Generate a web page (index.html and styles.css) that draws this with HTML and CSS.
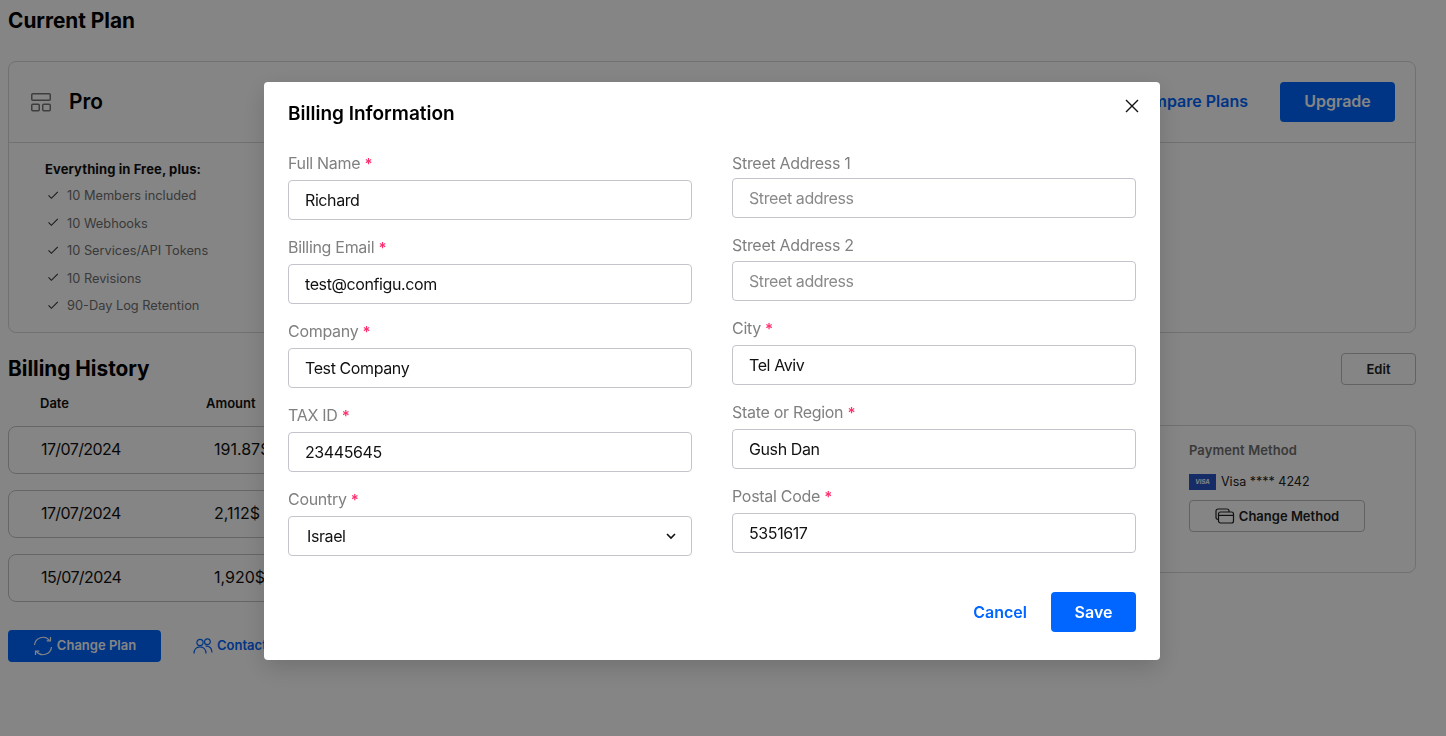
FILE: index.html
```html
<!DOCTYPE html>
<html lang="en">
<head>
    <meta charset="UTF-8">
    <meta name="viewport" content="width=device-width, initial-scale=1.0">
    <title>Billing</title>
    <link rel="stylesheet" href="styles.css">
</head>
<body>
    <main class="page">
        <h1 class="page-title">Current Plan</h1>

        <section class="plan-card">
            <div class="plan-head">
                <svg class="plan-icon" width="22" height="20" viewBox="0 0 22 20" fill="none" stroke="#777" stroke-width="1.5">
                    <rect x="1.75" y="1.75" width="18.5" height="6.5" rx="1"/>
                    <rect x="1.75" y="12.25" width="7.5" height="6.5" rx="1"/>
                    <rect x="12.75" y="12.25" width="7.5" height="6.5" rx="1"/>
                </svg>
                <h2 class="plan-name">Pro</h2>
                <a class="compare-link">Compare Plans</a>
                <button class="btn-upgrade">Upgrade</button>
            </div>
            <div class="plan-body">
                <p class="plan-intro">Everything in Free, plus:</p>
                <ul class="plan-list">
                    <li><svg width="12" height="10" viewBox="0 0 12 10" fill="none" stroke="#333" stroke-width="1.1"><path d="M1.5 4.4l2.9 2.9L10.8 .9"/></svg>10 Members included</li>
                    <li><svg width="12" height="10" viewBox="0 0 12 10" fill="none" stroke="#333" stroke-width="1.1"><path d="M1.5 4.4l2.9 2.9L10.8 .9"/></svg>10 Webhooks</li>
                    <li><svg width="12" height="10" viewBox="0 0 12 10" fill="none" stroke="#333" stroke-width="1.1"><path d="M1.5 4.4l2.9 2.9L10.8 .9"/></svg>10 Services/API Tokens</li>
                    <li><svg width="12" height="10" viewBox="0 0 12 10" fill="none" stroke="#333" stroke-width="1.1"><path d="M1.5 4.4l2.9 2.9L10.8 .9"/></svg>10 Revisions</li>
                    <li><svg width="12" height="10" viewBox="0 0 12 10" fill="none" stroke="#333" stroke-width="1.1"><path d="M1.5 4.4l2.9 2.9L10.8 .9"/></svg>90-Day Log Retention</li>
                </ul>
            </div>
        </section>

        <div class="billing-head">
            <h2 class="billing-title">Billing History</h2>
            <button class="btn-edit">Edit</button>
        </div>

        <div class="billing-grid">
            <div class="history">
                <div class="history-cols">
                    <span class="col-date">Date</span>
                    <span>Amount</span>
                </div>
                <div class="history-row"><span class="col-date">17/07/2024</span><span>191.87$</span></div>
                <div class="history-row"><span class="col-date">17/07/2024</span><span>2,112$</span></div>
                <div class="history-row"><span class="col-date">15/07/2024</span><span>1,920$</span></div>
            </div>
            <aside class="payment">
                <h3 class="payment-title">Payment Method</h3>
                <div class="payment-card">
                    <span class="visa-logo">VISA</span>
                    <span class="visa-text">Visa **** 4242</span>
                </div>
                <button class="btn-method">
                    <svg width="20" height="16" viewBox="0 0 20 16" fill="none" stroke="#222" stroke-width="1.2">
                        <path d="M3.5 11.4H3a2 2 0 0 1-2-2V3a2 2 0 0 1 2-2h9a2 2 0 0 1 2 2v1"/>
                        <rect x="3.5" y="4" width="15" height="11" rx="2"/>
                        <path d="M3.5 7.4h15"/>
                    </svg>
                    Change Method
                </button>
            </aside>
        </div>

        <div class="page-actions">
            <button class="btn-change">
                <svg width="20" height="20" viewBox="0 0 20 20" fill="none" stroke="#fff" stroke-width="1.2">
                    <path d="M1.5 9a8.5 8.5 0 0 1 15-4.6"/>
                    <path d="M17.5 1v3.8h-3.8"/>
                    <path d="M18.5 11a8.5 8.5 0 0 1-15 4.6"/>
                    <path d="M2.5 19v-3.8h3.8"/>
                </svg>
                <span class="btn-change-text">Change Plan</span>
            </button>
            <a class="contact-link">
                <svg width="20" height="16" viewBox="0 0 20 16" fill="none" stroke="#0066ff" stroke-width="1.2">
                    <circle cx="7" cy="4.4" r="3.1"/>
                    <circle cx="14.4" cy="3.8" r="2.9"/>
                    <path d="M1 15.500c0-4 2.500-6.600 6-6.600s6 2.600 6 6.600"/>
                    <path d="M12.600 8.200c3.600-.5 6.400 1.900 6.400 6.300"/>
                </svg>
                <span class="btn-change-text">Contact Sales</span>
            </a>
        </div>
    </main>

    <div class="overlay">
        <form class="modal">
            <div class="modal-head">
                <h2 class="modal-title">Billing Information</h2>
                <svg class="modal-close" width="14" height="14" viewBox="0 0 14 14" fill="none" stroke="#111" stroke-width="1.4">
                    <path d="M1 1l12 12M13 1L1 13"/>
                </svg>
            </div>

            <div class="modal-cols">
                <div class="modal-col">
                    <div class="field">
                        <label class="label req">Full Name <span class="star">*</span></label>
                        <input class="input" value="Richard">
                    </div>
                    <div class="field">
                        <label class="label req">Billing Email <span class="star">*</span></label>
                        <input class="input" value="test@configu.com">
                    </div>
                    <div class="field">
                        <label class="label req">Company <span class="star">*</span></label>
                        <input class="input" value="Test Company">
                    </div>
                    <div class="field">
                        <label class="label req">TAX ID <span class="star">*</span></label>
                        <input class="input" value="23445645">
                    </div>
                    <div class="field">
                        <label class="label req">Country <span class="star">*</span></label>
                        <div class="select-wrap">
                            <select class="input select"><option>Israel</option></select>
                            <svg class="select-arrow" width="10" height="7" viewBox="0 0 10 7" fill="none" stroke="#111" stroke-width="1.6"><path d="M1 1l4 4 4-4"/></svg>
                        </div>
                    </div>
                </div>

                <div class="modal-col">
                    <div class="field">
                        <label class="label">Street Address 1</label>
                        <input class="input" placeholder="Street address">
                    </div>
                    <div class="field">
                        <label class="label">Street Address 2</label>
                        <input class="input" placeholder="Street address">
                    </div>
                    <div class="field">
                        <label class="label req">City <span class="star">*</span></label>
                        <input class="input" value="Tel Aviv">
                    </div>
                    <div class="field">
                        <label class="label req">State or Region <span class="star">*</span></label>
                        <input class="input" value="Gush Dan">
                    </div>
                    <div class="field">
                        <label class="label req">Postal Code <span class="star">*</span></label>
                        <input class="input" value="5351617">
                    </div>
                </div>
            </div>

            <div class="modal-foot">
                <a class="btn-cancel">Cancel</a>
                <button class="btn-save" type="button">Save</button>
            </div>
        </form>
    </div>
</body>
</html>
```

FILE: styles.css
```css
* {
    box-sizing: border-box;
}

body {
    margin: 0;
    height: 736px;
    overflow: hidden;
    background: #fff;
    color: #000;
    font-family: Inter, "Liberation Sans", sans-serif;
}

h1, h2, h3, p, ul {
    margin: 0;
    padding: 0;
}

button {
    font-family: inherit;
    cursor: pointer;
}

.page {
    padding: 7px 30px 0 8px;
}

.page-title {
    font-size: 20.8px;
    line-height: 28px;
    font-weight: 700;
    margin-bottom: 26px;
}

/* plan card */
.plan-card {
    height: 272px;
    border: 1px solid #d8d8d8;
    border-radius: 8px;
}

.plan-head {
    display: flex;
    align-items: center;
    height: 81px;
    padding: 0 20px 0 21px;
    border-bottom: 1px solid #d8d8d8;
}

.plan-icon {
    margin-right: 17px;
}

.plan-name {
    font-size: 20.8px;
    font-weight: 600;
    padding-bottom: 2px;
}

.compare-link {
    margin-left: auto;
    margin-right: 32px;
    padding-bottom: 2px;
    color: #0066ff;
    font-size: 16px;
    font-weight: 600;
}

.btn-upgrade {
    width: 115px;
    height: 40px;
    padding: 0 0 2px;
    border: 0;
    border-radius: 4px;
    background: #0066ff;
    color: #fff;
    font-size: 16px;
    font-weight: 600;
}

.plan-body {
    padding: 17px 36px;
}

.plan-intro {
    font-size: 13px;
    line-height: 18px;
    font-weight: 700;
    letter-spacing: 0.1px;
    color: #111;
    margin-bottom: 4px;
}

.plan-list {
    list-style: none;
}

.plan-list li {
    display: flex;
    align-items: center;
    gap: 8px;
    height: 27.5px;
    padding-left: 2px;
    font-size: 12.8px;
    color: #707070;
}

/* billing */
.billing-head {
    display: flex;
    align-items: center;
    justify-content: space-between;
    margin-top: 20px;
    height: 32px;
}

.billing-title {
    font-size: 20.8px;
    font-weight: 700;
    padding-bottom: 1px;
}

.btn-edit {
    width: 75px;
    height: 32px;
    border: 1px solid #bdbdbd;
    border-radius: 4px;
    background: transparent;
    color: #222;
    font-size: 13px;
    font-weight: 600;
}

.billing-grid {
    display: grid;
    grid-template-columns: 1fr 272px;
    gap: 16px;
}

.history-cols {
    display: flex;
    align-items: center;
    height: 35px;
    margin-bottom: 6px;
    font-size: 13px;
    font-weight: 600;
    padding-left: 32px;
    color: #111;
}

.history-cols .col-date {
    width: 166px;
}

.history-row {
    display: flex;
    align-items: center;
    height: 48px;
    margin-bottom: 16px;
    padding: 0 0 2px 32px;
    border: 1px solid #c4c4c4;
    border-radius: 8px;
    font-size: 16px;
    color: #111;
}

.history-row .col-date {
    width: 173px;
    letter-spacing: -0.6px;
}

.payment {
    height: 148px;
    margin-top: 40px;
    padding: 16px 44px;
    border: 1px solid #d8d8d8;
    border-radius: 8px;
}

.payment-title {
    font-size: 13px;
    line-height: 16px;
    font-weight: 600;
    letter-spacing: 0.1px;
    color: #707070;
    margin-bottom: 16px;
}

.payment-card {
    display: flex;
    align-items: center;
    gap: 5px;
    font-size: 12.5px;
    color: #222;
    height: 16px;
    margin-bottom: 10px;
}

.visa-text {
    padding-bottom: 2px;
}

.visa-logo {
    width: 27px;
    height: 16px;
    background: #2b55c4;
    color: #fff;
    font-size: 6px;
    line-height: 16px;
    font-weight: 700;
    font-style: italic;
    text-align: center;
}

.btn-method {
    display: flex;
    align-items: center;
    justify-content: center;
    gap: 4px;
    width: 176px;
    height: 32px;
    border: 1px solid #bdbdbd;
    border-radius: 4px;
    background: transparent;
    color: #222;
    font-size: 13px;
    font-weight: 600;
}

.page-actions {
    display: flex;
    align-items: center;
    gap: 32px;
    margin-top: 12px;
}

.btn-change {
    display: flex;
    align-items: center;
    justify-content: center;
    gap: 4px;
    width: 153px;
    height: 32px;
    border: 0;
    border-radius: 4px;
    background: #0066ff;
    color: #fff;
    font-size: 13px;
    font-weight: 600;
}

.btn-change-text {
    padding-bottom: 2px;
}

.contact-link {
    display: flex;
    align-items: center;
    gap: 4px;
    color: #0066ff;
    font-size: 13px;
    font-weight: 600;
}

/* modal */
.overlay {
    position: fixed;
    inset: 0;
    padding: 82px 0 0 264px;
    background: rgba(0, 0, 0, 0.48);
}

.modal {
    width: 896px;
    height: 578px;
    padding: 0 24px;
    border-radius: 4px;
    background: #fff;
    box-shadow: 0 8px 24px rgba(0, 0, 0, 0.16);
}

.modal-head {
    display: flex;
    align-items: flex-start;
    justify-content: space-between;
    height: 72px;
    padding-top: 18px;
}

.modal-title {
    font-size: 19px;
    line-height: 28px;
    font-weight: 600;
}

.modal-close {
    margin-top: -1px;
    margin-right: -3px;
}

.modal-cols {
    display: flex;
    gap: 40px;
}

.modal-col {
    flex: 1;
}

.field {
    margin-bottom: 18px;
}

.label {
    display: block;
    height: 24.4px;
    font-size: 16px;
    line-height: 18px;
    letter-spacing: -0.3px;
    color: #808080;
}

.label.req {
    height: 26px;
}

.star {
    color: #ff2d6b;
    font-size: 15px;
    font-weight: 600;
}

.input {
    display: block;
    width: 100%;
    height: 40px;
    padding: 0 16px;
    border: 1px solid #c4c4cc;
    border-radius: 4px;
    background: #fff;
    color: #111;
    font-family: inherit;
    font-size: 16px;
    letter-spacing: -0.4px;
    outline: none;
}

.input::placeholder {
    color: #8a8a8a;
}

.select-wrap {
    position: relative;
}

.select {
    appearance: none;
    padding-left: 18px;
}

.select-arrow {
    position: absolute;
    right: 16px;
    top: 17px;
}

.modal-foot {
    display: flex;
    align-items: center;
    justify-content: flex-end;
    gap: 24px;
    margin-top: 18px;
}

.btn-cancel {
    color: #0066ff;
    font-size: 16px;
    font-weight: 600;
}

.btn-save {
    width: 85px;
    height: 40px;
    border: 0;
    border-radius: 4px;
    background: #0066ff;
    color: #fff;
    font-size: 16px;
    font-weight: 600;
}
```
